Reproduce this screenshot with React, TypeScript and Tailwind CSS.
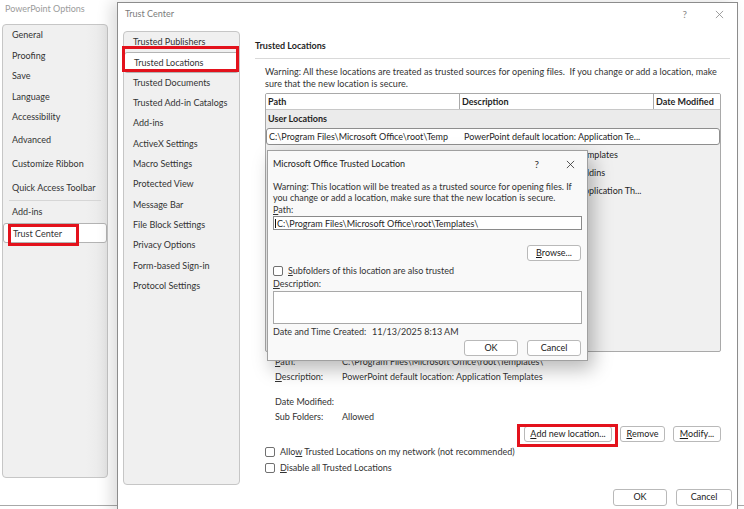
import React from 'react';

const U = ({ children }: { children: React.ReactNode }) => (
  <span className="underline underline-offset-[1px] decoration-[0.5px]">{children}</span>
);

const CloseIcon = ({ className }: { className?: string }) => (
  <svg viewBox="0 0 10 10" className={className} fill="none" stroke="currentColor" strokeWidth="0.9">
    <path d="M1 1L9 9M9 1L1 9" />
  </svg>
);

const Btn = ({ children, className = '' }: { children: React.ReactNode; className?: string }) => (
  <div className={`h-[16px] flex items-center justify-center border border-[#b9b9b9] rounded-[3px] bg-white text-[#1a1a1a] ${className}`}>
    {children}
  </div>
);

const Check = () => <div className="w-[10px] h-[10px] shrink-0 border border-[#707070] rounded-[2px] bg-white" />;

const pptNav: (string | number)[] = [
  'General', 'Proofing', 'Save', 'Language', 'Accessibility', 2,
  'Advanced', 4, 'Customize Ribbon', 3, 'Quick Access Toolbar', -4, 'Add-ins', 'Trust Center',
];

const trustNav = [
  'Trusted Publishers', 'Trusted Locations', 'Trusted Documents', 'Trusted Add-in Catalogs', 'Add-ins',
  'ActiveX Settings', 'Macro Settings', 'Protected View', 'Message Bar', 'File Block Settings',
  'Privacy Options', 'Form-based Sign-in', 'Protocol Settings',
];

const rows = [
  ['C:\\Users\\Sachin\\AppData\\Roaming\\Microsoft\\Templates\\', 'PowerPoint default location: Templates'],
  ['C:\\Program Files\\Microsoft Office\\root\\Office16\\ADDINS', 'PowerPoint default location: Addins'],
  ['C:\\Program Files\\Microsoft Office\\root\\Document Themes', 'PowerPoint default location: Application Th...'],
];

export default function App() {
  return (
    <div className="relative w-[744px] h-[509px] overflow-hidden bg-white text-[9px] text-[#1f1f1f] font-['Lato','Noto_Sans',sans-serif]">
      {/* PowerPoint Options window (behind) */}
      <div className="absolute left-0 top-0 w-[744px] h-[506px] bg-white border-b border-[#a8a8a8]">
        <div className="h-[17px] pl-[5px] leading-[17px] text-[#9c9c9c]">PowerPoint Options</div>
        <div className="ml-[2px] mt-[7px] w-[106px] h-[454px] border border-[#c6c6c6] rounded-[4px] bg-[#f0f0f0] bg-gradient-to-r from-[#f0f0f0] from-80% to-[#e8e8e8]">
          {pptNav.map((item, i) =>
            typeof item === 'number' ? (
              item < 0 ? (
                <div key={i} className="h-[4px] flex items-center px-[6px]">
                  <div className="w-full border-t border-[#d6d6d6]" />
                </div>
              ) : (
                <div key={i} style={{ height: item }} />
              )
            ) : (
              <div
                key={i}
                className={`h-[20.5px] leading-[20.5px] pl-[9px] text-[#333] ${
                  item === 'Trust Center' ? 'bg-white border border-[#b3b3b3] rounded-[3px] pl-[8px] leading-[18.5px]' : ''
                }`}
              >
                {item}
              </div>
            )
          )}
        </div>
      </div>

      {/* Trust Center window */}
      <div className="absolute left-[117px] top-[2px] w-[621px] h-[512px] bg-white border border-[#8c8c8c] shadow-[-6px_0_14px_rgba(0,0,0,0.14)]">
        <div className="h-[28px] flex items-start pt-[5px] pl-[7px] pr-[13px]">
          <span className="text-[#7c7c7c] leading-[12px]">Trust Center</span>
          <span className="ml-auto text-[#8a8a8a] text-[10px] leading-[12px]">?</span>
          <CloseIcon className="ml-[28px] mt-[2px] w-[9px] h-[9px] text-[#8a8a8a]" />
        </div>
        <div className="flex">
          <div className="ml-[5px] w-[117px] h-[454px] border border-[#c6c6c6] rounded-[4px] bg-[#f0f0f0] shrink-0">
            {trustNav.map((item) => (
              <div
                key={item}
                className={`h-[20.33px] leading-[20.33px] pl-[9px] text-[#333] ${
                  item === 'Trusted Locations' ? 'bg-white border border-[#b3b3b3] rounded-[3px] pl-[8px] leading-[18.33px]' : ''
                }`}
              >
                {item}
              </div>
            ))}
          </div>

          <div className="ml-[15px] w-[477px] flex flex-col">
            <div className="mt-[9px] h-[12px] leading-[12px] font-bold">Trusted Locations</div>
            <div className="mt-[6px] w-[475px] border-t border-[#d9d9d9]" />
            <div className="ml-[10px] mt-[7px] leading-[12px] text-[#333] tracking-[0.04px]">
              Warning: All these locations are treated as trusted sources for opening files.&nbsp; If you change or add a location, make
              <br />
              sure that the new location is secure.
            </div>

            {/* Table */}
            <div className="ml-[10px] mt-[3px] w-[456px] h-[259px] border border-[#a9a9a9] rounded-[2px] bg-[#f0f0f0] overflow-hidden flex flex-col">
              <div className="h-[16px] shrink-0 flex bg-white border-b border-[#c8c8c8] font-bold">
                <div className="w-[194px] pl-[2px] leading-[15px] border-r border-[#a9a9a9]">Path</div>
                <div className="w-[194px] pl-[2px] leading-[15px] border-r border-[#a9a9a9]">Description</div>
                <div className="flex-1 pl-[2px] leading-[15px] whitespace-nowrap overflow-hidden">Date Modified</div>
              </div>
              <div className="h-[18px] shrink-0 leading-[18px] pl-[2px] font-bold bg-[#ebebeb]">User Locations</div>
              <div className="h-[17px] shrink-0 flex bg-white border border-[#8e8e8e] rounded-[3px] leading-[15px]">
                <div className="w-[194px] pl-[2px] whitespace-nowrap overflow-hidden">C:\Program Files\Microsoft Office\root\Temp</div>
                <div className="w-[194px] pl-[3px] whitespace-nowrap overflow-hidden">PowerPoint default location: Application Te...</div>
              </div>
              {rows.map(([p, d]) => (
                <div key={p} className="h-[17.5px] shrink-0 flex leading-[17.5px] mt-[0.5px]">
                  <div className="w-[195px] pl-[2px] whitespace-nowrap overflow-hidden">{p}</div>
                  <div className="w-[194px] pl-[3px] whitespace-nowrap overflow-hidden">{d}</div>
                </div>
              ))}
            </div>

            {/* Details */}
            <div className="ml-[20px] mt-[2px] flex flex-col text-[#333]">
              <div className="h-[15px] leading-[15px] flex">
                <span className="w-[67px]"><U>P</U>ath:</span>
                <span>C:\Program Files\Microsoft Office\root\Templates\</span>
              </div>
              <div className="h-[15px] leading-[15px] flex">
                <span className="w-[67px]"><U>D</U>escription:</span>
                <span>PowerPoint default location: Application Templates</span>
              </div>
              <div className="h-[10px]" />
              <div className="h-[15px] leading-[15px] flex">
                <span className="w-[67px]">Date Modified:</span>
              </div>
              <div className="h-[15px] leading-[15px] flex">
                <span className="w-[67px]">Sub Folders:</span>
                <span>Allowed</span>
              </div>
            </div>

            <div className="mt-[1.5px] w-[466px] flex justify-end gap-[8px]">
              <Btn className="w-[88px]"><U>A</U>dd new location...</Btn>
              <Btn className="w-[45px]"><U>R</U>emove</Btn>
              <Btn className="w-[48px]"><U>M</U>odify...</Btn>
            </div>

            <div className="ml-[10px] mt-[2px] h-[16px] flex items-center gap-[5px] text-[#333]">
              <Check />
              <span>Allo<U>w</U> Trusted Locations on my network (not recommended)</span>
            </div>
            <div className="ml-[10px] h-[16px] flex items-center gap-[5px] text-[#333]">
              <Check />
              <span><U>D</U>isable all Trusted Locations</span>
            </div>

            <div className="mt-[13px] flex justify-end gap-[9px]">
              <Btn className="w-[54px] h-[17px]">OK</Btn>
              <Btn className="w-[56px] h-[17px]">Cancel</Btn>
            </div>
          </div>
        </div>
      </div>

      {/* Microsoft Office Trusted Location dialog */}
      <div className="absolute left-[267px] top-[150px] w-[321px] h-[211px] bg-[#f9f9f9] border border-[#a0a0a0] shadow-[5px_8px_18px_rgba(0,0,0,0.28)] flex flex-col">
        <div className="h-[26px] shrink-0 flex items-center pl-[5px] pr-[12px]">
          <span className="text-[#222]">Microsoft Office Trusted Location</span>
          <span className="ml-auto text-[10px] text-[#333]">?</span>
          <CloseIcon className="ml-[27px] w-[9px] h-[9px] text-[#333]" />
        </div>
        <div className="px-[5px] flex flex-col">
          <div className="mt-[4px] leading-[11px] text-[#333]">
            Warning: This location will be treated as a trusted source for opening files. If
            <br />
            you change or add a location, make sure that the new location is secure.
          </div>
          <div className="mt-[1px] h-[11px] leading-[11px] text-[#333]"><U>P</U>ath:</div>
          <div className="mt-[1px] w-[309px] h-[14px] bg-white border border-[#8a8a8a] flex items-center pl-[1px] leading-none">
            <span className="w-[1px] h-[9px] bg-[#111] mr-[1px]" />
            C:\Program Files\Microsoft Office\root\Templates\
          </div>
          <div className="mt-[15px] flex justify-end pr-[1px]">
            <Btn className="w-[54px]"><U>B</U>rowse...</Btn>
          </div>
          <div className="mt-[4px] h-[12px] flex items-center gap-[5px] text-[#333]">
            <Check />
            <span><U>S</U>ubfolders of this location are also trusted</span>
          </div>
          <div className="mt-[1px] h-[11px] leading-[11px] text-[#333]"><U>D</U>escription:</div>
          <div className="mt-[2px] w-[309px] h-[33px] bg-white border border-[#a8a8a8]" />
          <div className="mt-[3px] h-[10px] leading-[10px] flex text-[#333]">
            <span className="w-[99px]">Date and Time Created:</span>
            <span>11/13/2025 8:13 AM</span>
          </div>
          <div className="mt-[3px] flex justify-end gap-[9px] pr-[1px]">
            <Btn className="w-[54px] h-[15px] border-[#0067c0] border-[1.5px]">OK</Btn>
            <Btn className="w-[54px] h-[15px]">Cancel</Btn>
          </div>
        </div>
      </div>

      {/* Red highlight boxes */}
      <div className="absolute left-[8px] top-[224px] w-[71px] h-[22px] border-[3px] border-[#e3121c]" />
      <div className="absolute left-[122px] top-[46px] w-[117px] h-[26px] border-[3px] border-[#e3121c]" />
      <div className="absolute left-[517px] top-[424px] w-[101px] h-[23px] border-[3px] border-[#e3121c]" />
    </div>
  );
}
